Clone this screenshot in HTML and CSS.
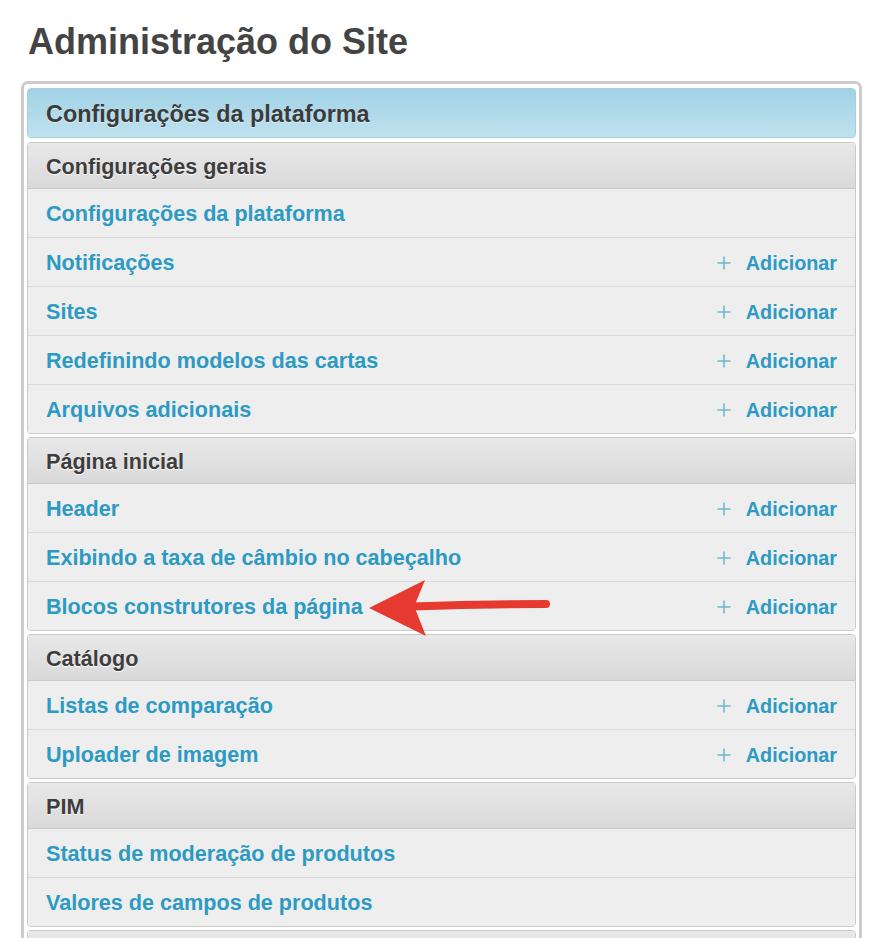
FILE: index.html
```html
<!DOCTYPE html>
<html lang="pt">
<head>
<meta charset="utf-8">
<title>Administração do Site</title>
<link rel="stylesheet" href="styles.css">
</head>
<body>
<div class="page">
  <h1 class="title">Administração do Site</h1>
  <div class="panel">
    <div class="caption">Configurações da plataforma</div>

    <div class="module">
      <div class="module-head">Configurações gerais</div>
      <div class="row"><a class="link" href="#">Configurações da plataforma</a></div>
      <div class="row"><a class="link" href="#">Notificações</a><a class="add" href="#"><svg class="plus" viewBox="0 0 14 14"><path d="M7 0.5V13.5M0.5 7H13.5"/></svg>Adicionar</a></div>
      <div class="row"><a class="link" href="#">Sites</a><a class="add" href="#"><svg class="plus" viewBox="0 0 14 14"><path d="M7 0.5V13.5M0.5 7H13.5"/></svg>Adicionar</a></div>
      <div class="row"><a class="link" href="#">Redefinindo modelos das cartas</a><a class="add" href="#"><svg class="plus" viewBox="0 0 14 14"><path d="M7 0.5V13.5M0.5 7H13.5"/></svg>Adicionar</a></div>
      <div class="row"><a class="link" href="#">Arquivos adicionais</a><a class="add" href="#"><svg class="plus" viewBox="0 0 14 14"><path d="M7 0.5V13.5M0.5 7H13.5"/></svg>Adicionar</a></div>
    </div>

    <div class="module">
      <div class="module-head">Página inicial</div>
      <div class="row"><a class="link" href="#">Header</a><a class="add" href="#"><svg class="plus" viewBox="0 0 14 14"><path d="M7 0.5V13.5M0.5 7H13.5"/></svg>Adicionar</a></div>
      <div class="row"><a class="link" href="#">Exibindo a taxa de câmbio no cabeçalho</a><a class="add" href="#"><svg class="plus" viewBox="0 0 14 14"><path d="M7 0.5V13.5M0.5 7H13.5"/></svg>Adicionar</a></div>
      <div class="row"><a class="link" href="#">Blocos construtores da página</a><a class="add" href="#"><svg class="plus" viewBox="0 0 14 14"><path d="M7 0.5V13.5M0.5 7H13.5"/></svg>Adicionar</a></div>
    </div>

    <div class="module">
      <div class="module-head">Catálogo</div>
      <div class="row"><a class="link" href="#">Listas de comparação</a><a class="add" href="#"><svg class="plus" viewBox="0 0 14 14"><path d="M7 0.5V13.5M0.5 7H13.5"/></svg>Adicionar</a></div>
      <div class="row"><a class="link" href="#">Uploader de imagem</a><a class="add" href="#"><svg class="plus" viewBox="0 0 14 14"><path d="M7 0.5V13.5M0.5 7H13.5"/></svg>Adicionar</a></div>
    </div>

    <div class="module">
      <div class="module-head">PIM</div>
      <div class="row"><a class="link" href="#">Status de moderação de produtos</a></div>
      <div class="row"><a class="link" href="#">Valores de campos de produtos</a></div>
    </div>

    <div class="module module-last">
      <div class="module-head"></div>
    </div>
  </div>
</div>
<svg class="arrow" viewBox="360 570 200 75" width="200" height="75">
  <path class="arrow-head" d="M369 608 L425 580 L416 602 L416 611 L426 636 Z"/>
  <path class="arrow-shaft" d="M412 606.5 Q480 604 546 604"/>
</svg>
</body>
</html>
```

FILE: styles.css
```css
html, body {
  margin: 0;
  padding: 0;
  background: #ffffff;
}

body {
  position: relative;
  font-family: "Liberation Sans", Arial, Helvetica, sans-serif;
  height: 938px;
  overflow: hidden;
}

.page {
  padding: 24px 12px 0 21px;
}

.title {
  margin: 0 0 21px 7px;
  font-size: 36px;
  line-height: 36px;
  font-weight: bold;
  color: #444444;
}

.panel {
  border: 3px solid #cccccc;
  border-bottom: none;
  border-radius: 7px 7px 0 0;
  padding: 4px 3px 0 3px;
  background: #ffffff;
}

.caption {
  height: 48px;
  line-height: 50px;
  padding-left: 18px;
  border: 1px solid #a8cfdf;
  border-radius: 4px;
  background: linear-gradient(#a1d2e5, #bfe2ef);
  color: #3b3b3b;
  font-size: 23.4px;
  font-weight: bold;
  text-shadow: 0 1px 1px rgba(255, 255, 255, 0.5);
}

.module {
  margin-top: 3px;
  border: 1px solid #c9c9c9;
  border-radius: 4px;
  background: #eeeeee;
  overflow: hidden;
}

.caption + .module {
  margin-top: 4px;
}

.module-head {
  height: 45px;
  line-height: 47px;
  padding-left: 18px;
  border-bottom: 1px solid #c9c9c9;
  background: linear-gradient(#e8e8e8, #d9d9d9);
  color: #3d3d3d;
  font-size: 21.6px;
  font-weight: bold;
  text-shadow: 0 1px 1px #ffffff;
}

.row {
  box-sizing: border-box;
  display: flex;
  align-items: center;
  justify-content: space-between;
  height: 48px;
  padding: 2px 18px 0 18px;
  background: #eeeeee;
}

.row + .row {
  height: 49px;
  border-top: 1px solid #d9d9d9;
}

.link,
.add {
  color: #2c9ac3;
  font-weight: bold;
  text-decoration: none;
}

.link {
  font-size: 21.6px;
}

.add {
  display: flex;
  align-items: center;
  gap: 15px;
  font-size: 19.8px;
}

.plus {
  width: 14px;
  height: 14px;
  fill: none;
  stroke: #68b6d2;
  stroke-width: 1.5;
}

.arrow {
  position: absolute;
  left: 360px;
  top: 570px;
  pointer-events: none;
}

.arrow-head {
  fill: #e63a30;
}

.arrow-shaft {
  fill: none;
  stroke: #e63a30;
  stroke-width: 8;
  stroke-linecap: round;
}
```
